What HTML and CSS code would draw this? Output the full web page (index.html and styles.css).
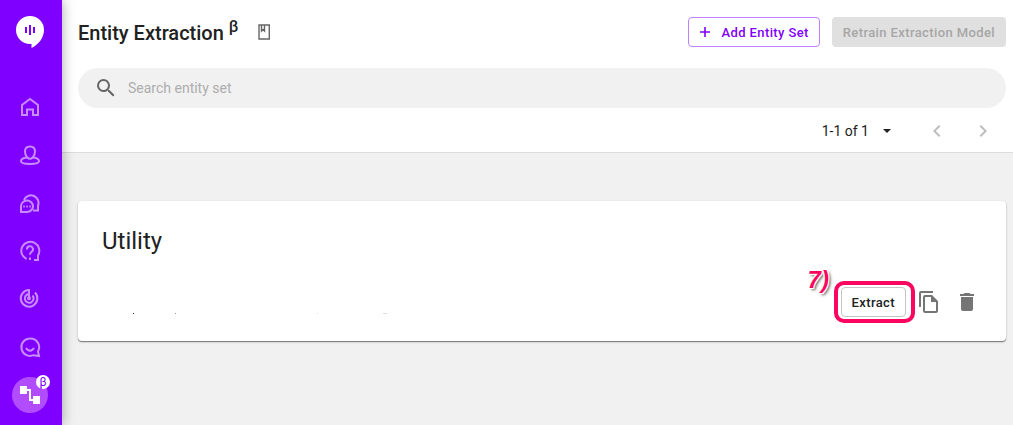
FILE: index.html
```html
<!DOCTYPE html>
<html lang="en">
  <head>
    <meta charset="UTF-8" />
    <meta name="viewport" content="width=device-width, initial-scale=1.0" />
    <title>Entity Extraction</title>
    <link rel="stylesheet" href="styles.css" />
  </head>

  <body>
    <nav class="sidebar" aria-label="Main">
      <a class="logo" href="#" aria-label="Home page">
        <svg width="28" height="32" viewBox="0 0 28 32">
          <path fill="#fff" d="M14 0a14 14 0 0 1 14 14c0 8-6 15-12.500 18v-4H14a14 14 0 0 1 0-28z" />
          <path fill="#8000ff" d="M9 11h2v6H9zM13 9h2v10h-2zM17 11h2v6h-2z" />
        </svg>
      </a>

      <a class="nav-item" href="#" aria-label="Dashboard">
        <svg class="nav-icon" viewBox="0 0 24 24">
          <path d="M4 20V10l8-6 8 6v10h-5v-5.500H9V20z" />
        </svg>
      </a>
      <a class="nav-item" href="#" aria-label="Users">
        <svg class="nav-icon" viewBox="0 0 24 24">
          <path d="M9.200 14.500C7.800 13 7 11 7 8.500 7 5.500 9 3.500 12 3.500s5 2 5 5c0 2.500-.8 4.500-2.200 6 3.200.3 6.200 1.500 6.200 3.800C21 20.300 17 21 12 21s-9-.7-9-2.700c0-2.300 3-3.500 6.200-3.800z" />
          <path d="M9.200 14.500c1.600 1.500 4 1.500 5.600 0" />
        </svg>
      </a>
      <a class="nav-item" href="#" aria-label="Conversations">
        <svg class="nav-icon" viewBox="0 0 24 24">
          <path d="M6 9a7.500 7.500 0 1 1 14 6v4.500h-5" />
          <path d="M3 21v-5.500a6 5.700 0 1 1 6 5.500z" />
          <path d="M5.300 15.500h1.500M8.300 15.500h1.500M11.300 15.500h1.500" />
        </svg>
      </a>
      <a class="nav-item" href="#" aria-label="Questions">
        <svg class="nav-icon" viewBox="0 0 24 24">
          <path d="M8.500 20A9 9 0 1 1 20 16.500V21h-4" />
          <path d="M9 10.500a3 3 0 1 1 4.500 2.300c-1 .7-1.500 1.200-1.500 3M12 18.500v2.500" />
        </svg>
      </a>
      <a class="nav-item" href="#" aria-label="Goals">
        <svg class="nav-icon" viewBox="0 0 24 24">
          <path d="M11 11V3a8.300 8.300 0 1 0 6 2.500M11 7a4.400 4.400 0 1 0 3.500 1.500" />
          <circle cx="11" cy="11.300" r="1" />
        </svg>
      </a>
      <a class="nav-item" href="#" aria-label="Small talk">
        <svg class="nav-icon" viewBox="0 0 24 24">
          <path d="M12 3.500a8.700 8.700 0 1 0 3.500 16.700l5.500.8-1-4.500A8.700 8.700 0 0 0 12 3.500z" />
          <path d="M8 13c2 3.500 6 3.500 8 0" />
        </svg>
      </a>
      <a class="nav-item" href="#" aria-label="Entity extraction" aria-current="page">
        <span class="nav-active">
          <svg width="20" height="18" viewBox="0 0 20 18">
            <path fill="#fff" d="M0 0h7v3h4v10h2v-3h7v8h-7v-3H9V5H7v3H0z" />
          </svg>
          <span class="nav-badge">β</span>
        </span>
      </a>
    </nav>

    <div class="page">
      <header class="header">
        <div class="title-row">
          <h1 class="title">Entity Extraction <sup>β</sup></h1>
          <a class="docs-link" href="#" aria-label="Documentation">
            <svg width="12" height="16" viewBox="0 0 12 16">
              <path fill="none" stroke="#666" stroke-width="1.400" d="M1 1h10.300v14H1zM3.500 1v6L5 5.500 6.500 7V1" />
            </svg>
          </a>
          <div class="title-actions">
            <button class="button button-outline" type="button">
              <svg width="12" height="12" viewBox="0 0 12 12">
                <path stroke="#8000ff" stroke-width="1.600" d="M6 1v10M1 6h10" />
              </svg>
              Add Entity Set
            </button>
            <button class="button button-disabled" type="button" disabled>Retrain Extraction Model</button>
          </div>
        </div>

        <label class="search">
          <svg width="24" height="24" viewBox="0 0 24 24" fill="#666">
            <path d="M15.500 14h-.79l-.28-.27A6.471 6.471 0 0 0 16 9.500 6.500 6.500 0 1 0 9.500 16c1.610 0 3.090-.59 4.230-1.570l.27.28v.79l5 4.990L20.490 19l-4.990-5zm-6 0C7.010 14 5 11.990 5 9.500S7.010 5 9.500 5 14 7.010 14 9.500 11.990 14 9.500 14z" />
          </svg>
          <input class="search-input" type="text" placeholder="Search entity set" aria-label="Search entity set" />
        </label>

        <div class="pager">
          <button class="pager-range" type="button">
            1-1 of 1
            <svg width="8" height="4" viewBox="0 0 8 4"><path fill="#222" d="M0 0h8L4 4z" /></svg>
          </button>
          <button class="pager-arrow" type="button" aria-label="Previous page" disabled>
            <svg width="24" height="24" viewBox="0 0 24 24"><path d="M15.400 7.400 14 6l-6 6 6 6 1.400-1.400L10.800 12z" /></svg>
          </button>
          <button class="pager-arrow" type="button" aria-label="Next page" disabled>
            <svg width="24" height="24" viewBox="0 0 24 24"><path d="M10 6 8.600 7.400l4.600 4.600-4.600 4.600L10 18l6-6z" /></svg>
          </button>
        </div>
      </header>

      <main class="content">
        <section class="card">
          <h2 class="card-title">Utility</h2>
          <div class="card-row">
            <svg class="card-marks" width="288" height="2" viewBox="0 0 288 2" aria-hidden="true">
              <path fill="#333" d="M31 0h1v1h-1z" />
              <path fill="#999" d="M73 0h1v1h-1z" />
              <path fill="#ddd" d="M215 0h1v1h-1zM281 0h4v1h-4z" />
            </svg>
            <div class="card-actions">
              <div class="extract">
                <button class="button button-plain" type="button">Extract</button>
                <span class="extract-frame"></span>
                <span class="extract-step">7)</span>
              </div>
              <button class="icon-button" type="button" aria-label="Copy">
                <svg width="24" height="24" viewBox="0 0 24 24"><path d="M16 1H4a2 2 0 0 0-2 2v14h2V3h12V1zm-1 4H8a2 2 0 0 0-2 2v14a2 2 0 0 0 2 2h11a2 2 0 0 0 2-2V11l-6-6zM8 21V7h6v5h5v9H8z" /></svg>
              </button>
              <button class="icon-button" type="button" aria-label="Delete">
                <svg width="24" height="24" viewBox="0 0 24 24"><path d="M6 19a2 2 0 0 0 2 2h8a2 2 0 0 0 2-2V7H6v12zM19 4h-3.500l-1-1h-5l-1 1H5v2h14V4z" /></svg>
              </button>
            </div>
          </div>
        </section>
      </main>
    </div>
  </body>
</html>
```

FILE: styles.css
```css
/* Global Styles */
* {
  box-sizing: border-box;
}

body {
  margin: 0;
  display: flex;
  min-height: 100vh;
  background: #f1f1f1;
  color: #212121;
  font-family: Roboto, "Liberation Sans", sans-serif;
}

button {
  font-family: inherit;
  cursor: pointer;
}

button:disabled {
  cursor: default;
}

svg {
  display: block;
  flex-shrink: 0;
}

/* Sidebar */
.sidebar {
  position: relative;
  z-index: 1;
  display: flex;
  flex-direction: column;
  align-items: center;
  flex-shrink: 0;
  width: 62px;
  padding: 16px 2px 0 0;
  background: #8000ff;
  box-shadow: 0 0 12px rgba(0, 0, 0, 0.35);
}

.logo {
  margin-bottom: 35px;
}

.nav-item {
  display: flex;
  align-items: center;
  justify-content: center;
  width: 48px;
  height: 48px;
}

.nav-icon {
  width: 24px;
  height: 24px;
  fill: none;
  stroke: #c98cff;
  stroke-width: 2;
}

.nav-active {
  position: relative;
  display: flex;
  align-items: center;
  justify-content: center;
  width: 36px;
  height: 36px;
  border-radius: 50%;
  background: #b24dff;
}

.nav-badge {
  position: absolute;
  top: -2px;
  right: -2px;
  width: 14px;
  height: 14px;
  border-radius: 50%;
  background: #fff;
  color: #8000ff;
  font-size: 12px;
  line-height: 14px;
  text-align: center;
}

/* Header */
.page {
  flex: 1;
  min-width: 0;
}

.header {
  padding: 16px 7px 0 16px;
  background: #fff;
  border-bottom: 1px solid #dcdcdc;
}

.title-row {
  display: flex;
  align-items: center;
  height: 32px;
}

.title {
  margin: 0;
  padding-top: 2px;
  font-size: 20px;
  font-weight: 500;
  line-height: 32px;
}

.title sup {
  font-size: 16px;
  line-height: 0;
}

.docs-link {
  margin-left: 20px;
}

.title-actions {
  display: flex;
  gap: 12px;
  margin-left: auto;
}

.button {
  display: flex;
  align-items: center;
  height: 30px;
  padding: 0 10px;
  border: 1px solid transparent;
  border-radius: 4px;
  font-size: 13px;
  font-weight: 500;
  letter-spacing: 0.03em;
}

.button-outline {
  gap: 11px;
  border-color: #bf80ff;
  background: #fff;
  color: #8000ff;
}

.button-disabled {
  background: #e0e0e0;
  color: #a6a6a6;
}

.button-plain {
  border-color: #c4c4c4;
  background: #fff;
  color: #212121;
}

.search {
  display: flex;
  align-items: center;
  gap: 10px;
  height: 40px;
  margin-top: 20px;
  padding: 0 16px;
  border-radius: 20px;
  background: #f1f1f1;
}

.search-input {
  flex: 1;
  min-width: 0;
  padding: 0;
  border: none;
  outline: none;
  background: transparent;
  color: #212121;
  font-family: inherit;
  font-size: 14px;
}

.search-input::placeholder {
  color: #adadad;
}

.pager {
  display: flex;
  align-items: center;
  justify-content: flex-end;
  gap: 22px;
  height: 44px;
  padding: 2px 11px 0 0;
}

.pager-range {
  display: flex;
  align-items: center;
  gap: 14px;
  padding: 0;
  margin-right: 12px;
  border: none;
  background: none;
  color: #212121;
  font-size: 14px;
}

.pager-arrow {
  padding: 0;
  border: none;
  background: none;
  fill: #bdbdbd;
}

/* Card */
.content {
  padding: 48px 7px 48px 16px;
}

.card {
  padding: 24px;
  border-radius: 4px;
  background: #fff;
  box-shadow: 0 1px 1px rgba(0, 0, 0, 0.45), 0 1px 3px rgba(0, 0, 0, 0.15);
}

.card-title {
  margin: 0;
  font-size: 24px;
  font-weight: 400;
  line-height: 32px;
}

.card-row {
  display: flex;
  align-items: flex-end;
  justify-content: space-between;
  margin-top: 30px;
}

.card-marks {
  margin-bottom: 2px;
}

.card-actions {
  display: flex;
  align-items: center;
  gap: 14px;
  padding-right: 3px;
}

.icon-button {
  padding: 0;
  border: none;
  background: none;
  fill: #757575;
}

/* Step marker drawn around the Extract button */
.extract {
  position: relative;
  margin-right: -3px;
}

.extract-frame {
  position: absolute;
  inset: -6px -9px -6px -7px;
  border: 4px solid #fa0560;
  border-radius: 10px;
  pointer-events: none;
}

.extract-step {
  position: absolute;
  top: -21px;
  left: -33px;
  color: #fa0560;
  font-family: "Liberation Sans", Arial, sans-serif;
  font-size: 24px;
  font-style: italic;
  font-weight: 700;
  line-height: 28px;
  text-shadow: -1px -1px 0 #fff, 1px -1px 0 #fff, -1px 1px 0 #fff,
    1px 1px 0 #fff, 2px 2px 3px rgba(0, 0, 0, 0.7);
}
```
